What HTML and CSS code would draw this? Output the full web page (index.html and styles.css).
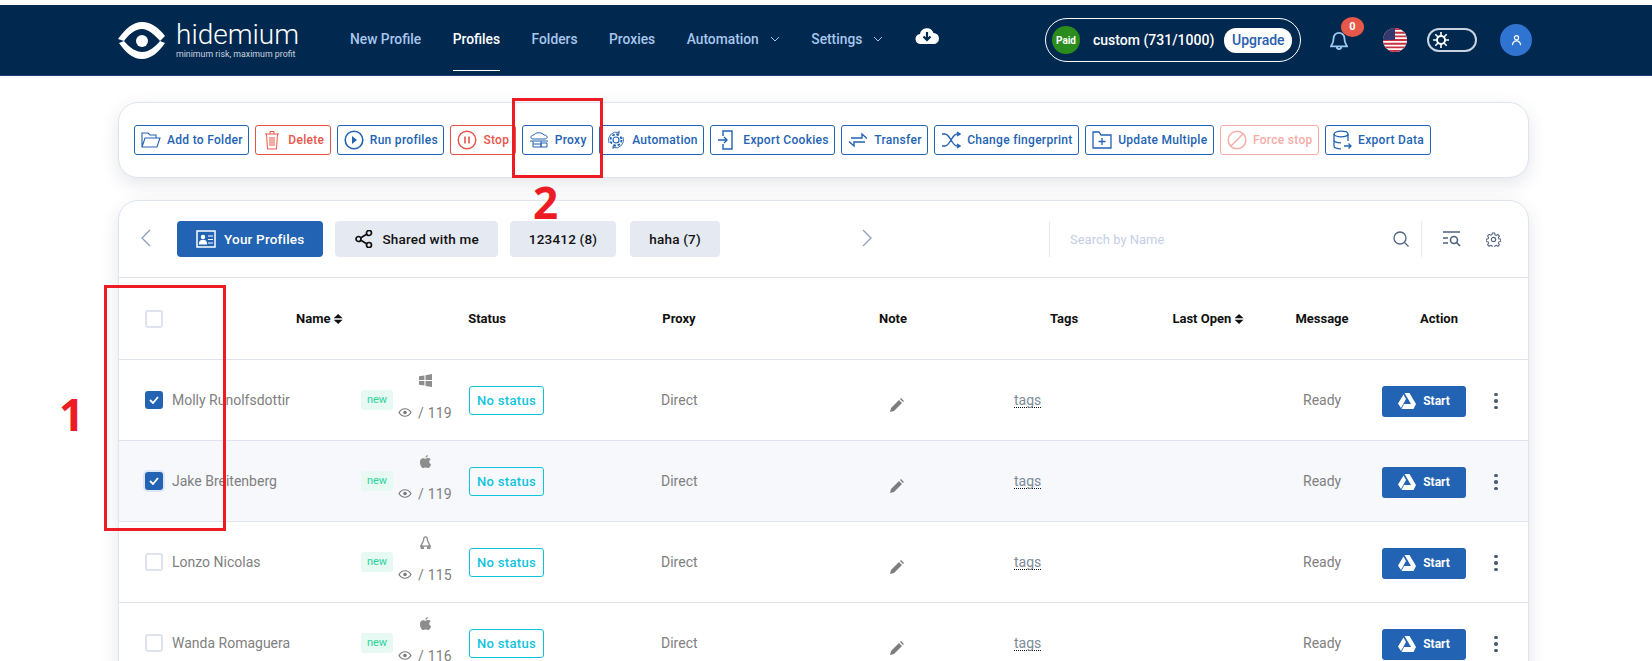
FILE: index.html
```html
<!DOCTYPE html>
<html>
<head>
	<title>Hidemium Profiles</title>
	<link rel="stylesheet" href="styles.css">
</head>
<body>
	<div class="topstrip"></div>
	<header class="navbar">
		<div class="logo">
			<svg class="logo-mark" viewBox="0 0 48 37"><path d="M0 17C7 7 15 0 24 0c9 0 17 6 23 14l-5 5C36 12 30 7 24 7 17 7 11 12 6 19z" fill="#fff"/><path d="M1 21l5-2c6 7 12 11 18 11 7 0 13-5 18-11l5 2c-6 9-14 16-23 16S8 31 1 21z" fill="#fff"/><circle cx="24" cy="19" r="6" fill="#fff"/></svg>
			<div class="logo-text">
				<span class="logo-name">hidemium</span>
				<span class="logo-tag">minimum risk, maximum profit</span>
			</div>
		</div>
		<nav class="nav-links">
			<a class="nav-link">New Profile</a>
			<a class="nav-link active">Profiles</a>
			<a class="nav-link">Folders</a>
			<a class="nav-link">Proxies</a>
			<a class="nav-link">Automation <svg class="caret" viewBox="0 0 10 6"><path d="M1 1l4 4 4-4" fill="none" stroke="currentColor"/></svg></a>
			<a class="nav-link">Settings <svg class="caret" viewBox="0 0 10 6"><path d="M1 1l4 4 4-4" fill="none" stroke="currentColor"/></svg></a>
			<svg class="cloud" viewBox="0 0 24 18"><path d="M6 17a5 5 0 0 1-1-10 7 7 0 0 1 13.500-1 5.500 5.500 0 0 1 0 11z" fill="#fff"/><path d="M12 5v7M8.500 9.500l3.500 3.500 3.500-3.500" fill="none" stroke="#01284f" stroke-width="2.200"/></svg>
		</nav>
		<div class="plan">
			<span class="paid">Paid</span>
			<span class="plan-text">custom (731/1000)</span>
			<span class="upgrade">Upgrade</span>
		</div>
		<div class="bell">
			<svg viewBox="0 0 20 22"><path d="M10 2a6 6 0 0 0-6 6c0 5-2 7-3 9h18c-1-2-3-4-3-9a6 6 0 0 0-6-6zM7.500 17.500a2.500 2.500 0 0 0 5 0" fill="none" stroke="#9cc8f2" stroke-width="2"/></svg>
			<span class="bell-count">0</span>
		</div>
		<svg class="flag" viewBox="0 0 24 24">
			<clipPath id="flagclip"><circle cx="12" cy="12" r="12"/></clipPath>
			<g clip-path="url(#flagclip)">
				<rect width="24" height="24" fill="#fff"/>
				<path d="M0 1h24M0 4.700h24M0 8.400h24M0 12h24M0 15.700h24M0 19.300h24M0 23h24" stroke="#c8313e" stroke-width="1.850"/>
				<rect width="12" height="12" fill="#34386e"/>
			</g>
		</svg>
		<div class="theme-toggle">
			<svg viewBox="0 0 16 16"><path d="M8 0v16M0 8h16M2.300 2.300l11.400 11.400M13.700 2.300L2.300 13.700" stroke="#fff" stroke-width="1.600"/><circle cx="8" cy="8" r="5" fill="#fff"/><circle cx="8" cy="8" r="3" fill="#01284f"/></svg>
		</div>
		<div class="avatar">
			<svg viewBox="0 0 12 14"><circle cx="6" cy="4" r="2.300" fill="none" stroke="#fff" stroke-width="1.300"/><path d="M1.500 12c.5-3 2-4.500 4.500-4.500s4 1.500 4.500 4.500" fill="none" stroke="#fff" stroke-width="1.300"/></svg>
		</div>
	</header>

	<main class="content">
		<section class="card actions">
			<button class="act"><svg viewBox="0 0 20 18"><path d="M1 16V2h6l2 2h6v3M1 16l3-9h15l-3 9z" fill="none" stroke="currentColor" stroke-width="1.100"/></svg>Add to Folder</button>
			<button class="act danger"><svg viewBox="0 0 20 20"><path d="M3 4h14M8 4V1.500h4V4M4.500 4l1 15h9l1-15M8 7v9M10 7v9M12 7v9" fill="none" stroke="currentColor" stroke-width="1"/></svg>Delete</button>
			<button class="act"><svg viewBox="0 0 20 20"><circle cx="10" cy="10" r="8.800" fill="none" stroke="currentColor" stroke-width="1.600"/><path d="M8 6l5 4-5 4z" fill="currentColor"/></svg>Run profiles</button>
			<button class="act danger"><svg viewBox="0 0 20 20"><circle cx="10" cy="10" r="8.800" fill="none" stroke="currentColor" stroke-width="1.400"/><path d="M8 6.500v7M12 6.500v7" stroke="currentColor" stroke-width="1.600"/></svg>Stop</button>
			<button class="act"><svg viewBox="0 0 20 18"><path d="M4 8C1 8 1 4 5 4c1-3 8-3 10 0 4 0 4 4 1 4z" fill="none" stroke="currentColor" stroke-width="1"/><path d="M1 10h18M4 10v6h8v-6M12 12h6v4h-6zM4 13h8" fill="none" stroke="currentColor" stroke-width="1"/></svg>Proxy</button>
			<button class="act"><svg viewBox="0 0 20 20"><circle cx="10" cy="10" r="3" fill="none" stroke="currentColor" stroke-width="1.200"/><circle cx="10" cy="10" r="5.500" fill="none" stroke="currentColor" stroke-width="1.800" stroke-dasharray="2.500 1.800"/><path d="M3 13A8 8 0 0 1 13 2.500M17 7a8 8 0 0 1-10 10.500M13 .8V4h-3M7 19v-3h3" fill="none" stroke="currentColor" stroke-width=".9"/></svg>Automation</button>
			<button class="act"><svg viewBox="0 0 20 20"><path d="M6 6V1h9v18H6v-5M1 10h9M7 7l3 3-3 3" fill="none" stroke="currentColor" stroke-width="1.400"/></svg>Export Cookies</button>
			<button class="act"><svg viewBox="0 0 20 18"><path d="M3 7h11V3l5 4.500M17 11H6v4l-5-4.500" fill="none" stroke="currentColor" stroke-width="1.400"/></svg>Transfer</button>
			<button class="act"><svg viewBox="0 0 20 18"><path d="M1 3h3c5 0 7 12 12 12h3M1 15h3c5 0 7-12 12-12h3M16 1l3 2-3 2M16 13l3 2-3 2" fill="none" stroke="currentColor" stroke-width="1.400"/></svg>Change fingerprint</button>
			<button class="act"><svg viewBox="0 0 20 18"><path d="M1 17V1h6l2 3h10v13zM10 7v7M6.500 10.500h7" fill="none" stroke="currentColor" stroke-width="1.300"/></svg>Update Multiple</button>
			<button class="act faded"><svg viewBox="0 0 20 20"><circle cx="10" cy="10" r="8.800" fill="none" stroke="currentColor" stroke-width="1.500"/><path d="M4 16L16 4" stroke="currentColor" stroke-width="1.500"/></svg>Force stop</button>
			<button class="act"><svg viewBox="0 0 20 20"><ellipse cx="9" cy="4" rx="7" ry="2.800" fill="none" stroke="currentColor" stroke-width="1.300"/><path d="M2 4v12c0 1.500 3 2.800 7 2.800M16 4v7M2 10c0 1.500 3 2.800 7 2.800M12 16h7M16.500 13.500l2.500 2.500-2.500 2.500" fill="none" stroke="currentColor" stroke-width="1.300"/></svg>Export Data</button>
		</section>

		<section class="card profiles">
			<div class="tabs-row">
				<svg class="chev" viewBox="0 0 10 18"><path d="M9 1L1 9l8 8" fill="none" stroke="#8ca0bc" stroke-width="1.300"/></svg>
				<div class="tabs">
					<button class="tab primary"><svg viewBox="0 0 20 18"><path d="M1 1h18v16H1z" fill="none" stroke="#fff" stroke-width="1.500"/><circle cx="7" cy="7" r="2.200" fill="#fff"/><path d="M3.500 14c0-5 7-5 7 0zM12 6h5M12 9.500h5M12 13h5" fill="#fff" stroke="#fff" stroke-width="1.200"/></svg>Your Profiles</button>
					<button class="tab"><svg viewBox="0 0 18 18"><circle cx="3.500" cy="9" r="2.500" fill="none" stroke="#111" stroke-width="1.700"/><circle cx="14" cy="3" r="2.500" fill="none" stroke="#111" stroke-width="1.700"/><circle cx="14" cy="15" r="2.500" fill="none" stroke="#111" stroke-width="1.700"/><path d="M5.500 8l6.500-4M5.500 10l6.500 4" stroke="#111" stroke-width="1.700"/></svg>Shared with me</button>
					<button class="tab">123412 (8)</button>
					<button class="tab last">haha (7)</button>
				</div>
				<svg class="chev right" viewBox="0 0 10 18"><path d="M1 1l8 8-8 8" fill="none" stroke="#8ca0bc" stroke-width="1.300"/></svg>
				<div class="search">
					<span class="search-text">Search by Name</span>
					<svg class="search-icon" viewBox="0 0 16 16"><circle cx="7" cy="7" r="6" fill="none" stroke="#4e6283" stroke-width="1.300"/><path d="M11.500 11.500l4 4" stroke="#4e6283" stroke-width="1.300"/></svg>
				</div>
				<div class="tools">
					<svg class="filter-icon" viewBox="0 0 18 16"><path d="M0 1h17M0 7h5M0 12h5" stroke="#4e6283" stroke-width="1.300"/><circle cx="11" cy="9" r="3.500" fill="none" stroke="#4e6283" stroke-width="1.600"/><path d="M13.500 11.500l3.500 3.500" stroke="#4e6283" stroke-width="1.600"/></svg>
					<svg class="gear-icon" viewBox="0 0 16 16"><circle cx="8" cy="8" r="2.300" fill="none" stroke="#4e6283" stroke-width="1.200"/><path d="M6.800 1h2.400l.4 2 1.300.6 1.800-1 1.600 1.700-1.100 1.700.6 1.300 2 .4v2.400l-2 .4-.6 1.300 1.100 1.700-1.600 1.700-1.800-1-1.300.6-.4 2H6.800l-.4-2-1.300-.6-1.800 1-1.600-1.700 1.100-1.700-.6-1.300-2-.4V7.600l2-.4.6-1.300-1.100-1.700 1.600-1.700 1.800 1 1.300-.6z" fill="none" stroke="#4e6283" stroke-width="1.100"/></svg>
				</div>
			</div>

			<div class="thead">
				<span class="box"></span>
				<span class="th th-name">Name <i class="sort"></i></span>
				<span class="th">Status</span>
				<span class="th">Proxy</span>
				<span class="th">Note</span>
				<span class="th">Tags</span>
				<span class="th">Last Open <i class="sort"></i></span>
				<span class="th">Message</span>
				<span class="th">Action</span>
			</div>

			<div id="rows"></div>
		</section>
	</main>

	<div class="mark mark-one"></div>
	<div class="mark mark-two"></div>
	<span class="mark-num num-one">1</span>
	<span class="mark-num num-two">2</span>

	<script src="rows.js"></script>
</body>
</html>
```

FILE: rows.js
```js
const os = {
	win: '<svg class="os" viewBox="0 0 12 12"><path d="M0 2l5-.7V5.600H0zM6 1.100L12 0v5.600H6zM0 6.400h5v4.300L0 10zM6 6.400h6V12l-6-1z" fill="#8d8d8d"/></svg>',
	mac: '<svg class="os" viewBox="0 0 12 14"><path d="M8.500 0C8.600 1.500 7.400 3 6 3 5.900 1.600 7.200.2 8.500 0zM6 4c1 0 1.700-.7 3-.7 1 0 2 .5 2.600 1.400-2.200 1.300-1.900 4.500.4 5.400-.7 1.700-1.800 3.900-3.200 3.900-1 0-1.300-.6-2.600-.6s-1.700.6-2.700.6C2 14 0 10.500 0 7.700 0 5 1.700 3.400 3.300 3.400 4.400 3.400 5.200 4 6 4z" fill="#8d8d8d"/></svg>',
	linux: '<svg class="os" viewBox="0 0 12 14"><path d="M6 1c-1.500 0-2 1.300-2 3 0 2-2.500 4-2.500 6.500M6 1c1.500 0 2 1.300 2 3 0 2 2.500 4 2.500 6.500M4 11h4" fill="none" stroke="#8d8d8d" stroke-width="1.400"/><path d="M0 10h4l.5 4H1zM8 10h4l-1 4H7.500z" fill="#8d8d8d"/></svg>'
};

const profiles = [
	{ name: 'Molly Runolfsdottir', os: 'win', ver: 119, checked: true },
	{ name: 'Jake Breitenberg', os: 'mac', ver: 119, checked: true, hover: true },
	{ name: 'Lonzo Nicolas', os: 'linux', ver: 115 },
	{ name: 'Wanda Romaguera', os: 'mac', ver: 116 }
];

const check = '<svg viewBox="0 0 10 8"><path d="M1 4l3 3 5-6" fill="none" stroke="#fff" stroke-width="1.800"/></svg>';

document.querySelector('#rows').innerHTML = profiles.map(p => `
	<div class="row${p.hover ? ' hover' : ''}">
		<span class="box${p.checked ? ' checked' : ''}${p.hover ? ' focus' : ''}">${p.checked ? check : ''}</span>
		<span class="name">${p.name}</span>
		<span class="badge">new</span>
		<span class="browser">
			${os[p.os]}
			<span class="ver"><svg class="eye" viewBox="0 0 14 10"><path d="M1 5c3-5 9-5 12 0-3 5-9 5-12 0z" fill="none" stroke="#7a7a7a" stroke-width="1.200"/><circle cx="7" cy="5" r="1.800" fill="#7a7a7a"/></svg>/ ${p.ver}</span>
		</span>
		<span class="status">No status</span>
		<span class="proxy">Direct</span>
		<svg class="pencil" viewBox="0 0 14 14"><path d="M0 14l1-4 8-8 3 3-8 8zM10 1l1-1 3 3-1 1z" fill="#7d7d7d"/></svg>
		<span class="tags">tags</span>
		<span class="msg">Ready</span>
		<button class="start"><svg viewBox="0 0 18 16"><path d="M6.500 0h5L18 11h-5zM5.500 1.500L8 6 3 15 0 10.500zM6 11h12l-2.500 5H3.500z" fill="#fff"/></svg>Start</button>
		<span class="kebab"><i></i><i></i><i></i></span>
	</div>`).join('');
```

FILE: styles.css
```css
* {
	box-sizing: border-box;
}

body {
	margin: 0;
	height: 661px;
	overflow: hidden;
	background-color: #fff;
	font-family: Roboto, sans-serif;
	position: relative;
}

.topstrip {
	height: 5px;
}

.navbar {
	height: 71px;
	background-color: #01284f;
	border-bottom: 1px solid #24407a;
	display: flex;
	align-items: center;
	padding-left: 118px;
}

.logo {
	display: flex;
	align-items: center;
	gap: 10px;
	width: 232px;
}

.logo-mark {
	width: 48px;
	height: 37px;
}

.logo-text {
	display: flex;
	flex-direction: column;
	color: #fff;
}

.logo-name {
	font-size: 28px;
	font-weight: 300;
	line-height: 29px;
}

.logo-tag {
	font-size: 8.800px;
	color: #c9d3df;
	line-height: 11px;
}

.nav-links {
	display: flex;
	align-items: flex-start;
	gap: 31.500px;
	width: 695px;
	height: 100%;
}

.nav-link {
	font-size: 13.800px;
	font-weight: 500;
	color: #a8c6ec;
	height: 66px;
	padding-top: 2px;
	display: flex;
	align-items: center;
	gap: 8px;
	border-bottom: 1px solid transparent;
}

.nav-link.active {
	color: #fff;
	border-bottom: 1px solid #fff;
}

.caret {
	width: 10px;
	height: 6px;
	margin-left: 3px;
}

.cloud {
	width: 24px;
	height: 18px;
	margin-top: 22px;
}

.plan {
	width: 256px;
	height: 44px;
	border: 1px solid #fff;
	border-radius: 22px;
	display: flex;
	align-items: center;
	padding: 0 6px;
	color: #fff;
	font-size: 14px;
}

.paid {
	width: 28px;
	height: 28px;
	border-radius: 50%;
	background-color: #2a8c1c;
	font-size: 10px;
	font-weight: 700;
	display: flex;
	align-items: center;
	justify-content: center;
	margin-right: 13px;
}

.plan-text {
	font-weight: 500;
	margin-right: 10px;
}

.upgrade {
	background-color: #fff;
	color: #2a5db0;
	font-weight: 500;
	border-radius: 12px;
	height: 25px;
	width: 68px;
	display: flex;
	align-items: center;
	justify-content: center;
}

.bell {
	position: relative;
	width: 18px;
	height: 20px;
	margin-left: 29px;
	margin-top: 2px;
}

.bell svg {
	display: block;
	width: 18px;
	height: 20px;
}

.bell-count {
	position: absolute;
	top: -14px;
	left: 11px;
	width: 23px;
	height: 20px;
	border-radius: 50%;
	background-color: #e8584a;
	color: #fff;
	font-size: 11px;
	font-weight: 700;
	text-align: center;
	line-height: 20px;
}

.flag {
	width: 24px;
	height: 24px;
	margin-left: 35px;
}

.theme-toggle {
	width: 50px;
	height: 24px;
	border: 2px solid #c9d3df;
	border-radius: 12px;
	margin-left: 20px;
	padding: 2px 4px;
	display: flex;
	align-items: center;
}

.theme-toggle svg {
	width: 16px;
	height: 16px;
}

.avatar {
	width: 32px;
	height: 32px;
	border-radius: 50%;
	background-color: #2f74d0;
	margin-left: 23px;
	display: flex;
	align-items: center;
	justify-content: center;
}

.avatar svg {
	width: 11px;
	height: 13px;
}

.content {
	padding: 26px 0 0 118px;
	width: 1529px;
}

.card {
	background-color: #fff;
	border: 1px solid #dfe3ef;
	border-radius: 20px;
	box-shadow: 0 6px 18px rgba(40, 50, 90, 0.12);
}

.actions {
	height: 76px;
	padding: 22px 0 0 15px;
	display: flex;
	gap: 6px;
	margin-bottom: 22px;
}

.act {
	height: 30px;
	padding: 0 5.500px 0 6px;
	display: flex;
	align-items: center;
	gap: 6px;
	background-color: #fff;
	border: 1px solid #2263b3;
	border-radius: 3px;
	color: #2263b3;
	font-family: Roboto, sans-serif;
	font-size: 12px;
	font-weight: 500;
	letter-spacing: .3px;
	white-space: nowrap;
}

.act svg {
	width: 20px;
	height: 20px;
	flex-shrink: 0;
}

.act.danger {
	color: #e8544a;
	border-color: #e8544a;
}

.act.faded {
	color: #f6aca6;
	border-color: #f6aca6;
}

.profiles {
	height: 500px;
}

.tabs-row {
	height: 77px;
	border-bottom: 1px solid #dfe3ef;
	display: flex;
	align-items: flex-start;
	padding: 20px 0 0 22px;
}

.chev {
	width: 10px;
	height: 18px;
	margin-top: 8px;
}

.tabs {
	display: flex;
	gap: 12px;
	margin-left: 26px;
	width: 685px;
}

.tab {
	height: 36px;
	padding: 0 19px;
	display: flex;
	align-items: center;
	gap: 8px;
	background-color: #e5e9f2;
	border: none;
	border-radius: 4px;
	color: #111;
	font-family: Roboto, sans-serif;
	font-size: 13.500px;
	font-weight: 500;
	letter-spacing: .2px;
	white-space: nowrap;
}

.tab.last {
	margin-left: 2px;
}

.tab svg {
	width: 20px;
	height: 18px;
}

.tab.primary {
	background-color: #2263b3;
	color: #fff;
}

.search {
	margin-left: 177px;
	width: 373px;
	height: 36px;
	border-left: 1px solid #e5e9f2;
	border-right: 1px solid #e5e9f2;
	display: flex;
	align-items: center;
	padding: 0 12px 0 20px;
	justify-content: space-between;
}

.search-text {
	font-size: 13px;
	color: #c3cfe6;
}

.search-icon {
	width: 16px;
	height: 16px;
}

.tools {
	display: flex;
	align-items: center;
	height: 36px;
}

.filter-icon {
	width: 18px;
	height: 16px;
	margin-left: 21px;
}

.gear-icon {
	width: 15px;
	height: 15px;
	margin-left: 25px;
}

.thead {
	height: 82px;
	border-bottom: 1px solid #dfe3ef;
	display: grid;
	grid-template-columns: 151px 134px 114px 270px 158px 184px 104px 124px 110px;
	align-items: center;
	padding-left: 26px;
}

.th {
	font-size: 13px;
	font-weight: 700;
	color: #111;
	text-align: center;
	white-space: nowrap;
}

.th-name {
	text-align: left;
}

.sort {
	display: inline-block;
	width: 9px;
	height: 10px;
	vertical-align: -1px;
	background-color: #111;
	clip-path: polygon(50% 0, 100% 42%, 0 42%, 0 58%, 100% 58%, 50% 100%, 0 58%, 0 42%);
}

.row {
	height: 81px;
	border-bottom: 1px solid #dfe3ef;
	display: grid;
	grid-template-columns: 27px 189px 37px 71px 192px 190px 163px 289px 79px 112px 1fr;
	align-items: center;
	padding-left: 26px;
	font-size: 14px;
	color: #808080;
}

.row.hover {
	background-color: #f7f8fc;
}

.box {
	width: 18px;
	height: 18px;
	border: 2px solid #dfe3ef;
	border-radius: 3px;
	background-color: #fff;
	display: flex;
	align-items: center;
	justify-content: center;
}

.box.checked {
	background-color: #2263b3;
	border-color: #2263b3;
}

.box.focus {
	box-shadow: 0 0 0 2px #dce6f5;
}

.box svg {
	width: 10px;
	height: 8px;
}

.name {
	white-space: nowrap;
}

.badge {
	width: 32px;
	height: 20px;
	background-color: #e6f9f3;
	color: #2bd39a;
	border-radius: 3px;
	font-size: 11px;
	text-align: center;
	line-height: 19px;
}

.browser {
	width: 54px;
	height: 47px;
	margin-bottom: 6px;
	display: flex;
	flex-direction: column;
	align-items: center;
	justify-content: space-between;
}

.os {
	width: 13px;
	height: 13px;
}

.ver {
	display: flex;
	align-items: center;
	gap: 6px;
	font-size: 14px;
	letter-spacing: .2px;
}

.eye {
	width: 14px;
	height: 11px;
}

.status {
	width: 75px;
	height: 29px;
	border: 1px solid #10c4de;
	border-radius: 3px;
	color: #10c4de;
	font-size: 13px;
	font-weight: 500;
	letter-spacing: .3px;
	text-align: center;
	line-height: 27px;
}

.pencil {
	width: 14px;
	height: 14px;
	margin-left: 39px;
	margin-top: 10px;
}

.tags {
	width: 27px;
	color: #7d8b99;
	border-bottom: 1px dotted #111;
	line-height: 14px;
}

.start {
	width: 84px;
	height: 31px;
	margin-top: 2px;
	background-color: #2263b3;
	border: none;
	border-radius: 3px;
	color: #fff;
	font-family: Roboto, sans-serif;
	font-size: 12px;
	font-weight: 700;
	display: flex;
	align-items: center;
	justify-content: center;
	gap: 7px;
}

.start svg {
	width: 18px;
	height: 16px;
}

.kebab {
	display: flex;
	flex-direction: column;
	gap: 3px;
	align-items: center;
	width: 4px;
	margin-top: 2px;
}

.kebab i {
	width: 3.500px;
	height: 3.500px;
	border-radius: 50%;
	background-color: #4e5b6e;
}

.mark {
	position: absolute;
	border: 3px solid #ed1c24;
}

.mark-one {
	left: 104px;
	top: 285px;
	width: 122px;
	height: 246px;
}

.mark-two {
	left: 512px;
	top: 98px;
	width: 91px;
	height: 80px;
}

.mark-num {
	position: absolute;
	color: #ed1c24;
	font-family: "Open Sans", sans-serif;
	font-weight: 700;
	font-size: 44px;
	line-height: 44px;
}

.num-one {
	left: 59px;
	top: 392px;
}

.num-two {
	left: 533px;
	top: 180px;
}
```
